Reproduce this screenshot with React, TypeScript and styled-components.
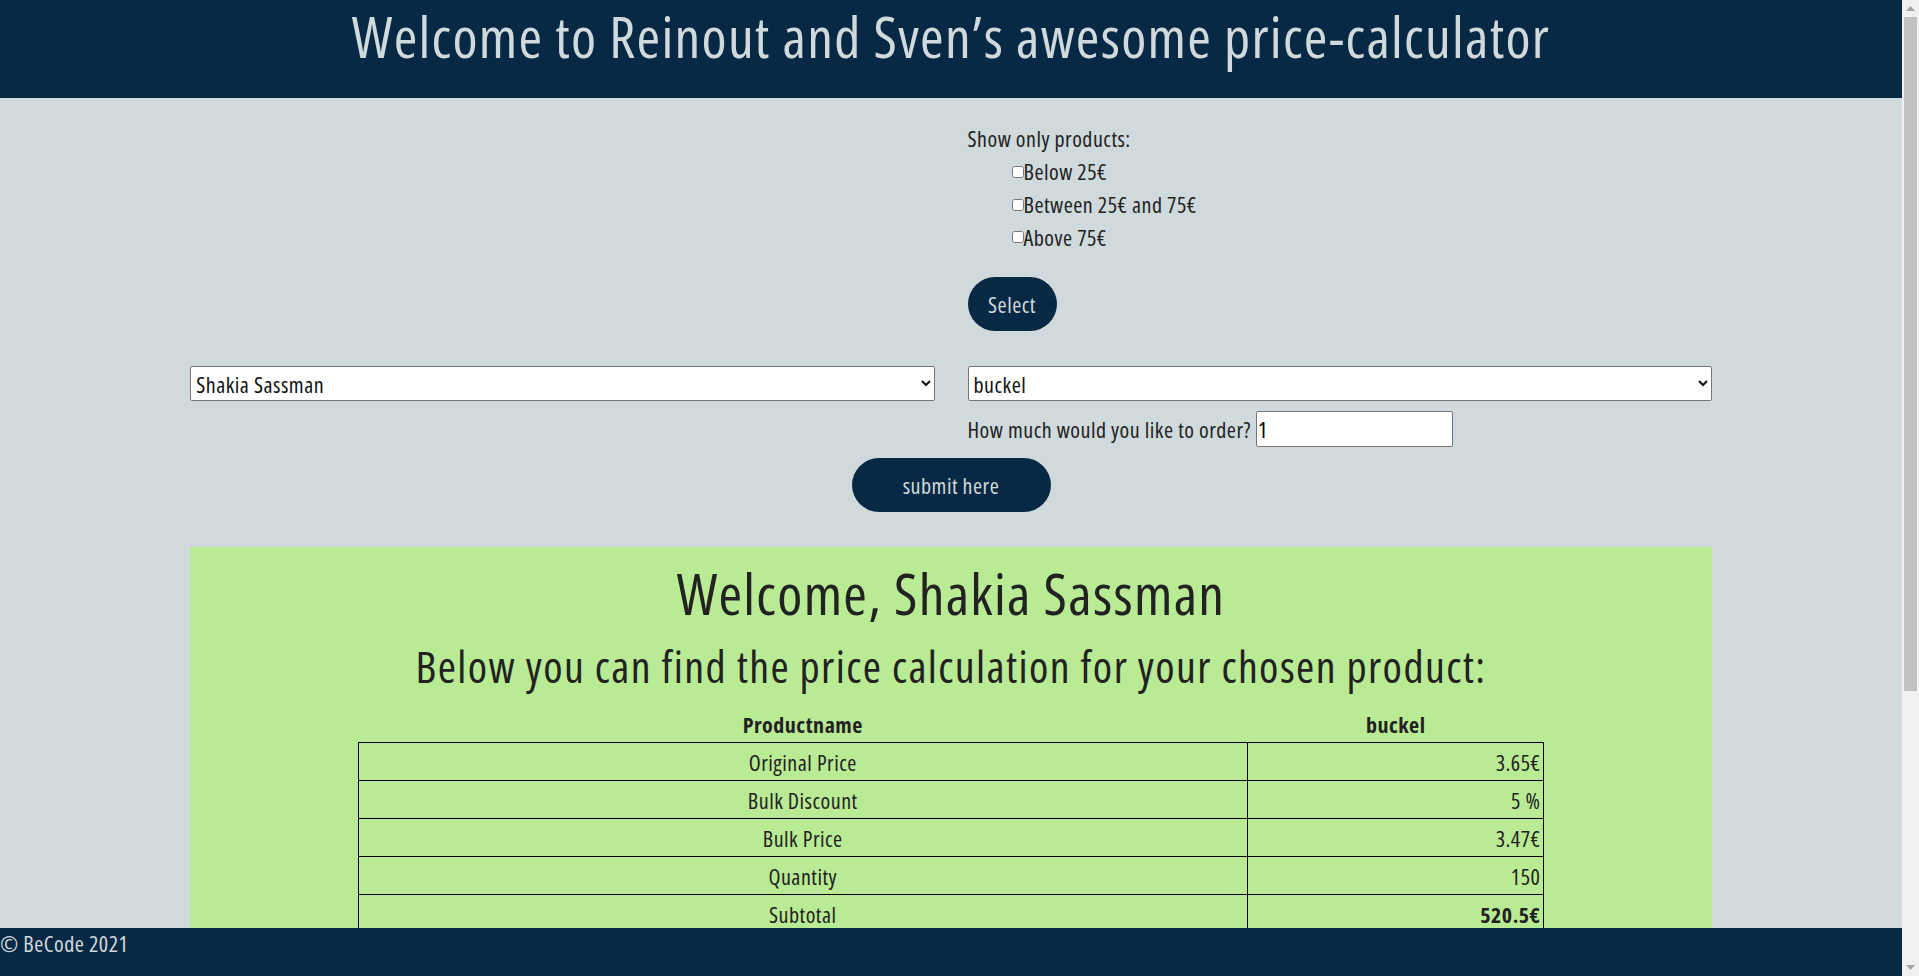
import React, {useState} from 'react';
import styled, {createGlobalStyle} from 'styled-components';

const navy = '#082945';
const mist = '#d0d9db';
const railWidth = 17;

const Global = createGlobalStyle`
  html, body {
    background: ${mist};
    font-family: "Open Sans", "Liberation Sans", sans-serif;
    font-stretch: 75%;
    font-weight: 400;
    color: #222;
  }
  body {
    margin: 0 ${railWidth}px 0 0;
  }
`;

const Header = styled.header`
  background: ${navy};
  height: 98px;
  text-align: center;

  > h1 {
    margin: 0;
    padding-top: 1px;
    color: ${mist};
    font-size: 57px;
    font-weight: 500;
    line-height: 70px;
    letter-spacing: 1.3px;
  }
`;

const Main = styled.main`
  width: 80%;
  margin: 0 auto;
  padding-bottom: 85px;
  font-size: 22px;
  letter-spacing: 0.5px;
`;

const TwoCols = styled.div`
  display: grid;
  grid-template-columns: 1fr 1fr;
  column-gap: 33px;
`;

const Filter = styled.form`
  grid-column: 2;
  padding-top: 25px;

  > p {
    margin: 0;
    line-height: 30px;
  }
`;

const CheckList = styled.ul`
  list-style: none;
  margin: 2px 0 0;
  padding-left: 40px;

  > li {
    height: 32.7px;
    line-height: 30px;
    display: flex;
    align-items: center;
  }

  input {
    margin: 1px 0 0 4px;
    width: 12px;
    height: 12px;
  }
`;

const PillButton = styled.button<{$width: number}>`
  display: block;
  background: ${navy};
  color: ${mist};
  border: none;
  border-radius: 30px;
  font-family: inherit;
  font-stretch: 75%;
  font-weight: 400;
  font-size: 22px;
  letter-spacing: 0.5px;
  height: 54px;
  width: ${p => p.$width}px;
  padding: 0;
  cursor: pointer;
`;

const SelectSpot = styled.div`
  margin-top: 24px;
`;

const Selects = styled(TwoCols)`
  margin-top: 35px;
  align-items: start;
`;

const Dropdown = styled.select`
  display: block;
  width: 100%;
  height: 35px;
  font-family: inherit;
  font-stretch: 75%;
  font-size: 22px;
  letter-spacing: 0.5px;
  color: #111;
  background: #fff;
  border: 1px solid #767676;
  border-radius: 2px;
  padding: 0 1px;
`;

const QtyRow = styled.label`
  display: flex;
  align-items: center;
  margin-top: 10px;

  > input {
    margin-left: 5px;
    width: 197px;
    height: 36px;
    box-sizing: border-box;
    font-family: inherit;
    font-stretch: 75%;
    font-size: 22px;
    border: 1px solid #767676;
    border-radius: 2px;
    padding: 0 1px;
  }
`;

const SubmitRow = styled.div`
  display: flex;
  justify-content: center;
  margin-top: 11px;
`;

const Result = styled.section`
  background: #b9ea94;
  margin-top: 35px;
  padding: 13px 0 40px;
  text-align: center;

  > h1 {
    margin: 0;
    font-size: 57px;
    font-weight: 500;
    line-height: 67px;
    letter-spacing: 1.3px;
  }

  > h2 {
    margin: 13px 0 0;
    font-size: 44px;
    font-weight: 500;
    line-height: 52px;
    letter-spacing: 1.4px;
  }
`;

const PriceTable = styled.table`
  width: 78%;
  margin: 14px auto 0;
  border-collapse: collapse;

  th {
    font-weight: 700;
    height: 36px;
    padding: 0;
    line-height: 30px;
  }

  td {
    border: 1px solid #000;
    height: 37px;
    padding: 0 3px;
    line-height: 30px;
  }

  td:first-child {
    width: 75%;
    text-align: center;
  }

  td:last-child {
    text-align: right;
  }
`;

const Footer = styled.footer`
  position: fixed;
  left: 0;
  right: ${railWidth}px;
  bottom: 0;
  height: 48px;
  background: ${navy};
  color: ${mist};
  font-size: 22px;
  letter-spacing: 0.5px;
  line-height: 30px;
`;

/* stand-in for the browser's classic scrollbar seen in the screenshot */
const ScrollRail = styled.div`
  position: fixed;
  top: 0;
  right: 0;
  bottom: 0;
  width: ${railWidth}px;
  background: #f1f1f1;
  display: flex;
  flex-direction: column;
  align-items: center;
`;

const RailArrow = styled.div`
  width: ${railWidth}px;
  height: 17px;
  display: flex;
  align-items: center;
  justify-content: center;
`;

const RailThumb = styled.div`
  width: 13px;
  height: 674px;
  background: #c1c1c1;
`;

const RailGap = styled.div`
  flex: 1;
`;

const rows: [string, string, boolean?][] = [
  ['Original Price', '3.65€'],
  ['Bulk Discount', '5 %'],
  ['Bulk Price', '3.47€'],
  ['Quantity', '150'],
  ['Subtotal', '520.5€', true],
  ['Group fixed discount', '0€'],
  ['Group variable discount', '0 %'],
  ['Customer fixed discount', '0€'],
  ['Customer variable discount', '0 %'],
  ['Best discount', '0€'],
  ['Price after discounts', '520.5€'],
  ['VAT (21%)', '109.31€'],
  ['Total', '629.81€', true],
];

function Triangle({down}: {down?: boolean}) {
  return (
    <svg width="9" height="5" viewBox="0 0 9 5">
      <path d={down ? 'M0 0H9L4.5 5Z' : 'M0 5H9L4.5 0Z'} fill="#a3a3a3"/>
    </svg>
  );
}

export default function App() {
  const [customer, setCustomer] = useState('Shakia Sassman');
  const [product, setProduct] = useState('buckel');
  const [qty, setQty] = useState('1');

  return (
    <>
      <Global/>
      <Header>
        <h1>Welcome to Reinout and Sven’s awesome price-calculator</h1>
      </Header>
      <Main>
        <TwoCols>
          <Filter>
            <p>Show only products:</p>
            <CheckList>
              <li><input type="checkbox" id="low"/><label htmlFor="low">Below 25€</label></li>
              <li><input type="checkbox" id="mid"/><label htmlFor="mid">Between 25€ and 75€</label></li>
              <li><input type="checkbox" id="high"/><label htmlFor="high">Above 75€</label></li>
            </CheckList>
            <SelectSpot>
              <PillButton type="button" $width={89}>Select</PillButton>
            </SelectSpot>
          </Filter>
        </TwoCols>
        <Selects>
          <Dropdown value={customer} onChange={e => setCustomer(e.target.value)}>
            <option>Shakia Sassman</option>
            <option>Reinout</option>
            <option>Sven</option>
          </Dropdown>
          <div>
            <Dropdown value={product} onChange={e => setProduct(e.target.value)}>
              <option>buckel</option>
              <option>bread</option>
            </Dropdown>
            <QtyRow>
              How much would you like to order?
              <input type="text" value={qty} onChange={e => setQty(e.target.value)}/>
            </QtyRow>
          </div>
        </Selects>
        <SubmitRow>
          <PillButton type="button" $width={199}>submit here</PillButton>
        </SubmitRow>
        <Result>
          <h1>Welcome, {customer}</h1>
          <h2>Below you can find the price calculation for your chosen product:</h2>
          <PriceTable>
            <thead>
              <tr>
                <th>Productname</th>
                <th>{product}</th>
              </tr>
            </thead>
            <tbody>
              {rows.map(([label, value, bold]) =>
                <tr key={label}>
                  <td>{label}</td>
                  <td>{bold ? <b>{value}</b> : value}</td>
                </tr>
              )}
            </tbody>
          </PriceTable>
        </Result>
      </Main>
      <Footer>© BeCode 2021</Footer>
      <ScrollRail aria-hidden>
        <RailArrow><Triangle/></RailArrow>
        <RailThumb/>
        <RailGap/>
        <RailArrow><Triangle down/></RailArrow>
      </ScrollRail>
    </>
  );
}
